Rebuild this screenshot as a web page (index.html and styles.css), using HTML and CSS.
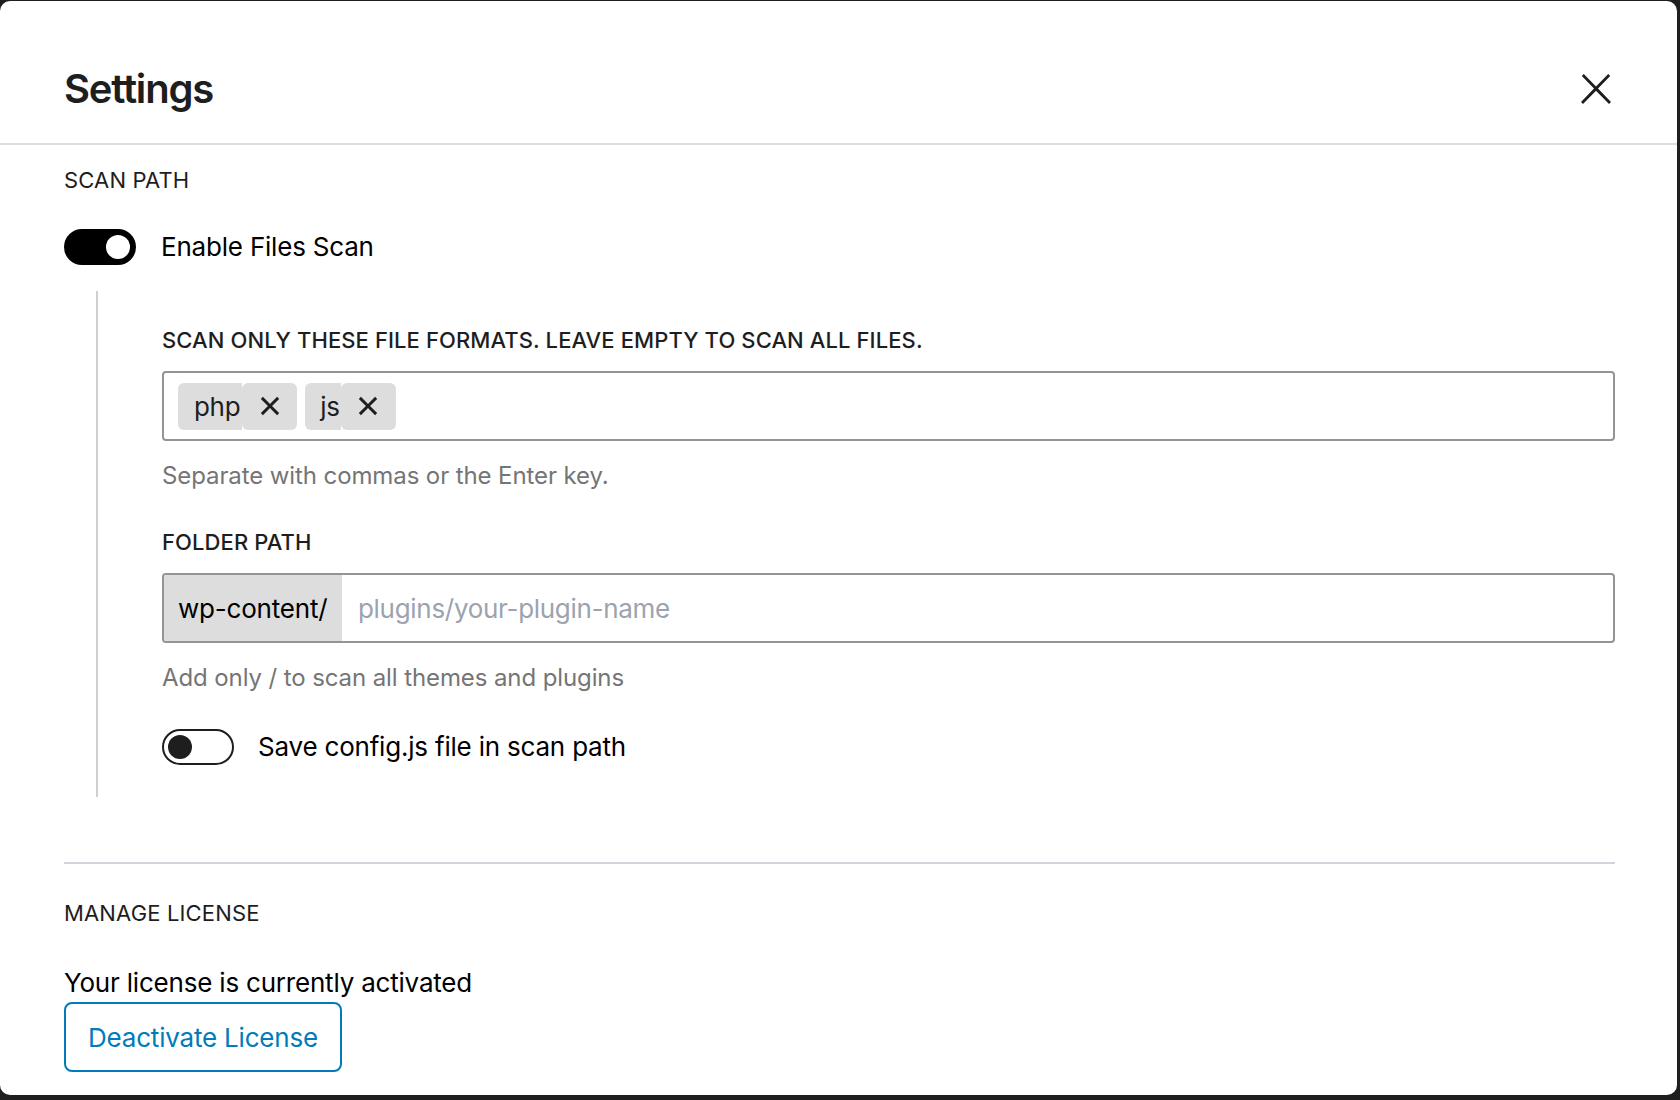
FILE: index.html
```html
<!DOCTYPE html>
<html lang="en">
<head>
<meta charset="utf-8">
<title>Settings</title>
<link rel="stylesheet" href="styles.css">
</head>
<body>
<div class="modal">
  <header class="modal-header">
    <h1 class="modal-title">Settings</h1>
    <button class="close-btn" type="button" aria-label="Close">
      <svg viewBox="0 0 24 24" width="48" height="48"><path d="M13 11.8l6.1-6.3-1-1-6.1 6.2-6.1-6.2-1 1 6.1 6.3-6.5 6.7 1 1 6.5-6.6 6.5 6.6 1-1z"/></svg>
    </button>
  </header>
  <div class="modal-body">
    <section class="section">
      <h2 class="section-title">Scan path</h2>
      <div class="toggle-row toggle-row--main">
        <span class="toggle is-on"><span class="knob"></span></span>
        <span class="toggle-label">Enable Files Scan</span>
      </div>
      <div class="nested">
        <div class="field">
          <div class="field-label">Scan only these file formats. Leave empty to scan all files.</div>
          <div class="token-input">
            <span class="token">
              <span class="token-text">php</span>
              <span class="token-remove"><svg viewBox="0 0 24 24" width="46" height="46"><path d="M12 13.06l3.712 3.713 1.061-1.06L13.061 12l3.712-3.712-1.06-1.06L12 10.938 8.288 7.227l-1.061 1.06L10.939 12l-3.712 3.712 1.06 1.061L12 13.061z"/></svg></span>
            </span>
            <span class="token">
              <span class="token-text token-text--short">js</span>
              <span class="token-remove"><svg viewBox="0 0 24 24" width="46" height="46"><path d="M12 13.06l3.712 3.713 1.061-1.06L13.061 12l3.712-3.712-1.06-1.06L12 10.938 8.288 7.227l-1.061 1.06L10.939 12l-3.712 3.712 1.06 1.061L12 13.061z"/></svg></span>
            </span>
          </div>
          <p class="help">Separate with commas or the Enter key.</p>
        </div>
        <div class="field field--second">
          <div class="field-label">Folder path</div>
          <div class="prefixed-input">
            <span class="prefix">wp-content/</span>
            <span class="placeholder">plugins/your-plugin-name</span>
          </div>
          <p class="help">Add only / to scan all themes and plugins</p>
        </div>
        <div class="toggle-row toggle-row--sub">
          <span class="toggle is-off"><span class="knob"></span></span>
          <span class="toggle-label">Save config.js file in scan path</span>
        </div>
      </div>
    </section>
    <hr class="divider">
    <section class="section license">
      <h2 class="section-title">Manage license</h2>
      <p class="license-text">Your license is currently activated</p>
      <button class="btn-outline" type="button">Deactivate License</button>
    </section>
  </div>
</div>
</body>
</html>
```

FILE: styles.css
```css
* { box-sizing: border-box; }

html, body {
  margin: 0;
  padding: 0;
  height: 100%;
}

body {
  background: #1f1f1f;
  font-family: Inter, "Noto Sans", "Liberation Sans", sans-serif;
  color: #1e1e1e;
  overflow: hidden;
}

.modal {
  width: 1677px;
  height: 1094px;
  margin-top: 1px;
  background: #fff;
  border-radius: 10px;
  overflow: hidden;
}

.modal-header {
  display: flex;
  align-items: center;
  justify-content: space-between;
  height: 144px;
  padding: 33px 57px 0 64px;
  border-bottom: 2px solid #dddddd;
}

.modal-title {
  margin: 0;
  font-size: 40px;
  line-height: 48px;
  font-weight: 600;
  color: #1e1e1e;
  letter-spacing: -1.2px;
}

.close-btn {
  width: 48px;
  height: 48px;
  padding: 0;
  border: 0;
  background: transparent;
  display: flex;
  align-items: center;
  justify-content: center;
}

.close-btn svg { fill: #1e1e1e; display: block; }

.modal-body {
  padding: 20px 62px 0 64px;
}

.section-title {
  margin: 0;
  font-size: 22px;
  line-height: 31px;
  font-weight: 400;
  text-transform: uppercase;
  letter-spacing: 0.15px;
  color: #1e1e1e;
}

.toggle-row {
  display: flex;
  align-items: center;
  height: 36px;
}

.toggle-row--main { margin-top: 33px; }
.toggle-row--main .toggle-label { margin-left: 25px; }
.toggle-row--sub { margin-top: 34px; }
.toggle-row--sub .toggle-label { margin-left: 24px; }

.toggle {
  display: flex;
  align-items: center;
  width: 72px;
  height: 36px;
  padding: 0 4px;
  border-radius: 18px;
  border: 2px solid #1e1e1e;
  flex: none;
}

.toggle .knob {
  width: 24px;
  height: 24px;
  border-radius: 50%;
}

.toggle.is-on {
  background: #000;
  border-color: #000;
  justify-content: flex-end;
}

.toggle.is-on .knob { background: #fff; }

.toggle.is-off {
  background: #fff;
  justify-content: flex-start;
}

.toggle.is-off .knob { background: #1e1e1e; }

.toggle-label {
  font-size: 26px;
  line-height: 36px;
  letter-spacing: -0.2px;
  color: #000;
}

.nested {
  margin: 26px 0 0 32px;
  padding: 34px 0 32px 64px;
  border-left: 2px solid #ccd0d4;
}

.field-label {
  font-size: 22px;
  line-height: 31px;
  font-weight: 500;
  text-transform: uppercase;
  letter-spacing: 0.1px;
  color: #1e1e1e;
}

.field--second { margin-top: 34px; }

.token-input {
  margin-top: 15px;
  height: 70px;
  border: 2px solid #949494;
  border-radius: 4px;
  display: flex;
  align-items: center;
  gap: 8px;
  padding: 0 14px;
}

.token {
  display: flex;
  height: 47px;
}

.token-text {
  display: flex;
  align-items: center;
  padding: 0 2px 0 16px;
  background: #dddddd;
  border-radius: 6px 0 0 6px;
  font-size: 26px;
  letter-spacing: -0.3px;
  color: #1e1e1e;
}

.token-text--short { padding-left: 15px; padding-right: 1px; }

.token-remove {
  display: flex;
  align-items: center;
  justify-content: center;
  width: 55px;
  background: #dddddd;
  border-radius: 6px;
}

.token-remove svg { fill: #1e1e1e; display: block; }

.help {
  margin: 18px 0 0;
  font-size: 24px;
  line-height: 34px;
  letter-spacing: -0.1px;
  color: #757575;
}

.prefixed-input {
  margin-top: 15px;
  height: 70px;
  border: 2px solid #949494;
  border-radius: 4px;
  display: flex;
  align-items: stretch;
  overflow: hidden;
}

.prefix {
  flex: none;
  display: flex;
  align-items: center;
  padding: 0 14px;
  width: 178px;
  white-space: nowrap;
  background: #dddddd;
  font-size: 26px;
  letter-spacing: -0.2px;
  color: #000;
}

.placeholder {
  display: flex;
  align-items: center;
  padding-left: 16px;
  white-space: nowrap;
  font-size: 26px;
  letter-spacing: -0.3px;
  color: #9ca3af;
}

.divider {
  margin: 65px 0 0;
  border: 0;
  height: 2px;
  background: #d1d5db;
}

.license .section-title { margin-top: 34px; }

.license-text {
  margin: 36px 0 0;
  font-size: 26px;
  line-height: 36px;
  letter-spacing: -0.2px;
  color: #000;
}

.btn-outline {
  margin-top: 1px;
  height: 70px;
  padding: 0 22px;
  display: inline-flex;
  align-items: center;
  border: 2px solid #007cba;
  border-radius: 8px;
  background: #fff;
  color: #007cba;
  font-family: inherit;
  font-size: 26px;
  letter-spacing: -0.2px;
}
```
